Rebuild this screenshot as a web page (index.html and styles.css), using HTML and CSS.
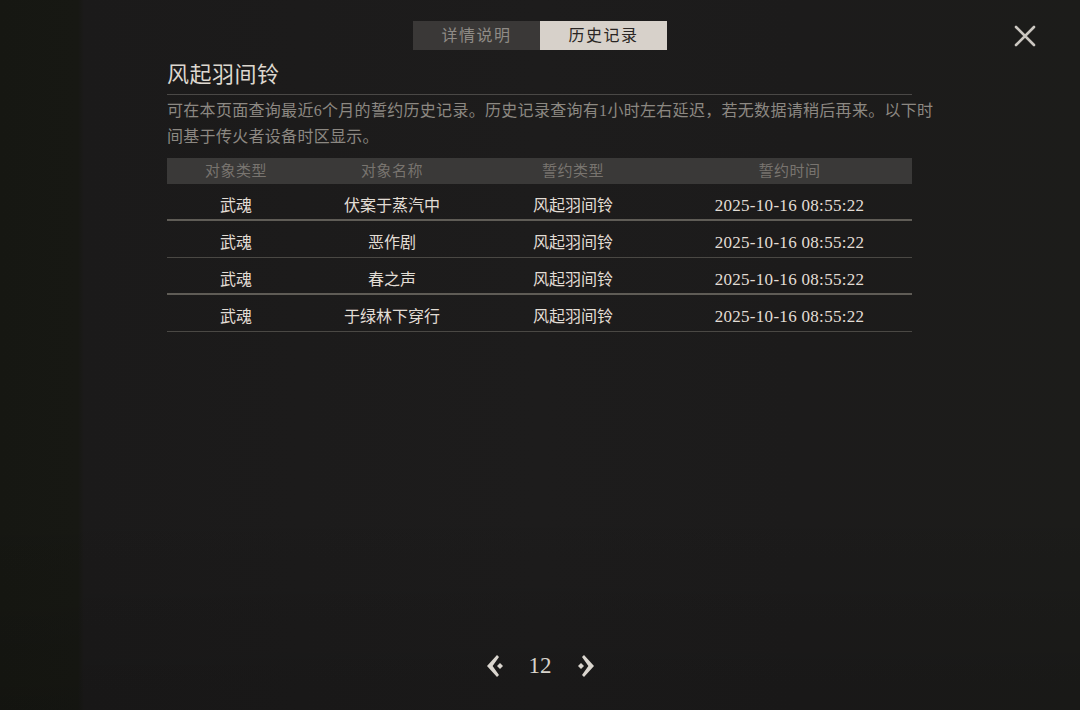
FILE: index.html
```html
<!DOCTYPE html>
<html lang="zh-CN">
<head>
<meta charset="utf-8">
<title>历史记录</title>
<link rel="stylesheet" href="styles.css">
</head>
<body>
<div class="page">
  <header class="topbar">
    <div class="spacer"></div>
    <nav class="tabs">
      <button class="tab">详情说明</button>
      <button class="tab tab-active">历史记录</button>
    </nav>
    <button class="close" aria-label="关闭">
      <svg width="22" height="22" viewBox="0 0 22 22"><path d="M2 2 L20 20 M20 2 L2 20" stroke="#cbc7c1" stroke-width="2.6" stroke-linecap="round" fill="none"/></svg>
    </button>
  </header>

  <main class="content">
    <h1 class="title">风起羽间铃</h1>
    <p class="desc">可在本页面查询最近6个月的誓约历史记录。历史记录查询有1小时左右延迟，若无数据请稍后再来。以下时间基于传火者设备时区显示。</p>

    <div class="table">
      <div class="row head">
        <div class="c c1">对象类型</div>
        <div class="c c2">对象名称</div>
        <div class="c c3">誓约类型</div>
        <div class="c c4">誓约时间</div>
      </div>
      <div class="row">
        <div class="c c1">武魂</div>
        <div class="c c2">伏案于蒸汽中</div>
        <div class="c c3">风起羽间铃</div>
        <div class="c c4 date">2025-10-16 08:55:22</div>
      </div>
      <div class="row">
        <div class="c c1">武魂</div>
        <div class="c c2">恶作剧</div>
        <div class="c c3">风起羽间铃</div>
        <div class="c c4 date">2025-10-16 08:55:22</div>
      </div>
      <div class="row">
        <div class="c c1">武魂</div>
        <div class="c c2">春之声</div>
        <div class="c c3">风起羽间铃</div>
        <div class="c c4 date">2025-10-16 08:55:22</div>
      </div>
      <div class="row">
        <div class="c c1">武魂</div>
        <div class="c c2">于绿林下穿行</div>
        <div class="c c3">风起羽间铃</div>
        <div class="c c4 date">2025-10-16 08:55:22</div>
      </div>
    </div>
  </main>

  <footer class="pager">
    <button class="arrow" aria-label="上一页">
      <svg width="20" height="24" viewBox="0 0 20 24"><path d="M11 1 L1 12 L11 23 L13 21 L6.6 12 L13 3 Z" fill="#dad5ce"/><path d="M14 9 L17 12 L14 15 L11 12 Z" fill="#dad5ce"/></svg>
    </button>
    <span class="num">12</span>
    <button class="arrow" aria-label="下一页">
      <svg width="20" height="24" viewBox="0 0 20 24"><path d="M9 1 L19 12 L9 23 L7 21 L13.4 12 L7 3 Z" fill="#dad5ce"/><path d="M6 9 L9 12 L6 15 L3 12 Z" fill="#dad5ce"/></svg>
    </button>
  </footer>
</div>
</body>
</html>
```

FILE: styles.css
```css
* { box-sizing: border-box; }

html, body {
  margin: 0;
  padding: 0;
  background: #1b1a1a;
}

body {
  font-family: "Liberation Serif", "Noto Sans CJK SC", serif;
  color: #e0dbd3;
}

.page {
  width: 1080px;
  height: 710px;
  display: flex;
  flex-direction: column;
  background:
    linear-gradient(to bottom, rgba(0,0,0,0) 70%, rgba(0,0,0,0.12) 100%),
    linear-gradient(to right, #161712 0, #171813 78px, #1b1a1a 84px, #1c1b1b 300px, #1d1c1c 540px, #1c1b1b 800px, #1c1c1a 1080px);
}

button {
  font: inherit;
  border: 0;
  background: none;
  padding: 0;
  cursor: pointer;
}

.topbar {
  display: grid;
  grid-template-columns: 1fr auto 1fr;
  align-items: center;
  padding-top: 21px;
}

.tabs {
  display: flex;
  height: 29px;
}

.tab {
  width: 127px;
  height: 29px;
  font-size: 16px;
  line-height: 30px;
  letter-spacing: 1.5px;
  background: #3a3837;
  color: #8f8b86;
}

.tab-active {
  background: #d7d1ca;
  color: #2a2624;
}

.close {
  justify-self: end;
  width: 22px;
  height: 22px;
  margin-right: 44px;
  display: flex;
}

.content {
  padding-left: 167px;
  padding-top: 10px;
}

.title {
  width: 745px;
  margin: 0;
  font-size: 22px;
  font-weight: normal;
  line-height: 30px;
  padding-bottom: 4px;
  color: #ddd7cf;
  letter-spacing: 0.5px;
  border-bottom: 1px solid #4a4846;
}

.desc {
  width: 772px;
  margin: 3px 0 0;
  font-size: 16px;
  line-height: 26px;
  letter-spacing: 0.3px;
  word-spacing: 2px;
  color: #8c8882;
}

.table {
  width: 745px;
  margin-top: 8px;
}

.row {
  display: grid;
  grid-template-columns: 138px 174px 188px 245px;
  height: 37px;
  align-items: start;
  padding-top: 11px;
  border-bottom: 1px solid #4a4844;
  font-size: 16px;
  color: #e2ddd5;
}

.row:nth-child(2),
.row:nth-child(4) {
  border-bottom: 2px solid #5f5c56;
}

.row.head {
  height: 26px;
  padding-top: 2px;
  background: #3a3938;
  border-bottom: 0;
  color: #78746f;
  font-size: 15px;
  letter-spacing: 0.5px;
}

.c {
  text-align: center;
  line-height: 22px;
}

.date {
  font-size: 17px;
  letter-spacing: 0.3px;
}

.pager {
  margin-top: auto;
  padding-bottom: 29px;
  display: flex;
  justify-content: center;
  align-items: center;
  gap: 23px;
  height: 60px;
}

.arrow {
  display: flex;
  width: 20px;
  height: 24px;
}

.num {
  font-size: 23px;
  color: #d8d3cc;
  line-height: 30px;
}
```
